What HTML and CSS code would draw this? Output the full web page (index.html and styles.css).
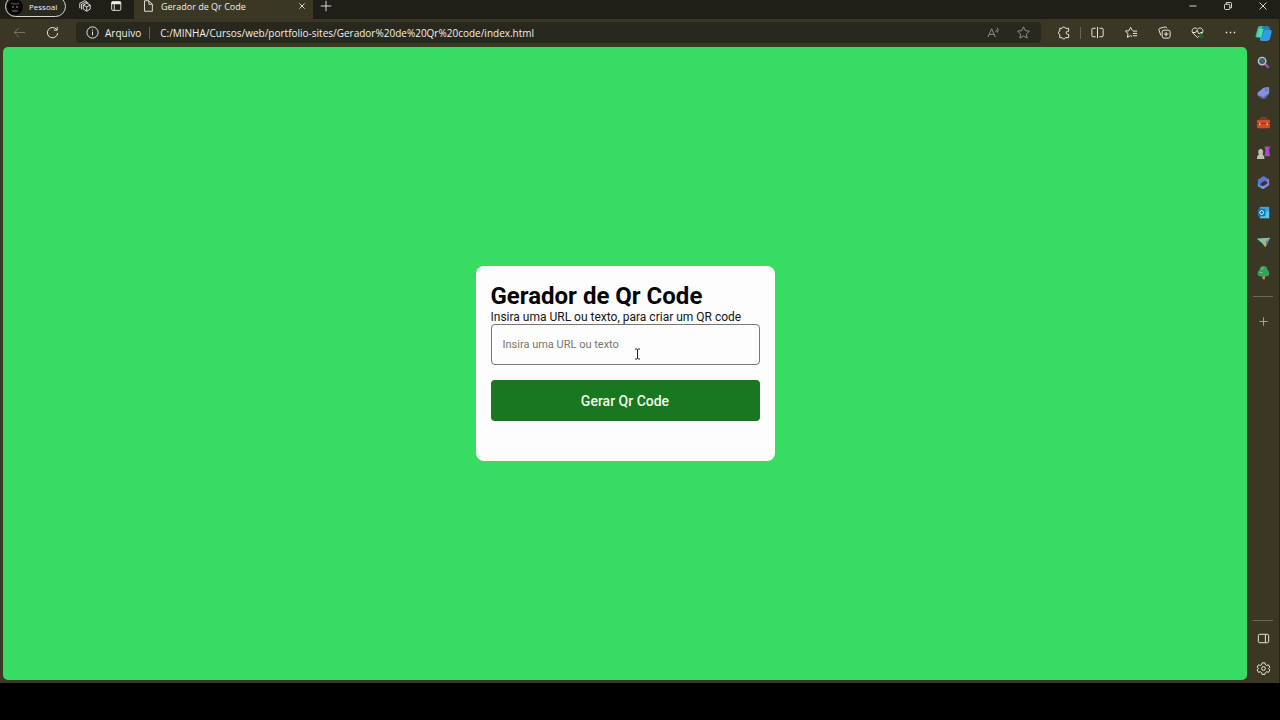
FILE: index.html
```html
<!DOCTYPE html>
<html lang="pt-BR">
<head>
<meta charset="utf-8">
<title>Gerador de Qr Code</title>
<link rel="stylesheet" href="styles.css">
</head>
<body>
<div class="browser">
  <header class="tabstrip">
    <button class="profile"><svg class="avatar" viewBox="0 0 16 16"><circle cx="8" cy="8" r="8" fill="#070707"/><path d="M4 5l1.500-1 1 1.500L8 4.500l1.500 1L10.500 4 12 5" stroke="#68652f" fill="none"/><path d="M5 8h2M9 8h2" stroke="#8c5a70" stroke-width="1.500"/><path d="M5 12h6" stroke="#55555a" stroke-width="1.500"/></svg><span>Pessoal</span></button>
    <button class="strip-btn" aria-label="Workspaces"><svg viewBox="0 0 16 16"><path d="M6 7l4-2 4 2v4.500l-4 2.500-4-2.500zM6 7l4 2 4-2M10 9v5"/><path d="M4 12V6l5-2.500 3 1M2 10.500V5l5.500-3 2.500 1"/></svg></button>
    <button class="strip-btn" aria-label="Guias verticais"><svg viewBox="0 0 16 16"><rect x="3" y="3" width="10.500" height="10" rx="1.500"/><path d="M3 4.500h10.500" stroke-width="3"/><path d="M6 6v7"/></svg></button>
    <div class="tab">
      <svg class="tab-file" viewBox="0 0 16 16"><path d="M4 2h5l4 4v8H4zM9 2v4h4"/></svg>
      <span class="tab-title">Gerador de Qr Code</span>
      <button class="tab-close" aria-label="Fechar guia"><svg viewBox="0 0 16 16"><path d="M5 5l6 6M11 5l-6 6"/></svg></button>
    </div>
    <button class="new-tab" aria-label="Nova guia"><svg viewBox="0 0 16 16"><path d="M8 2v12M2 8h12"/></svg></button>
    <div class="window-controls">
      <button aria-label="Minimizar"><svg viewBox="0 0 16 16"><path d="M4 8h8"/></svg></button>
      <button aria-label="Restaurar"><svg viewBox="0 0 16 16"><rect x="4" y="6" width="6" height="6" rx="1"/><path d="M6 6V4h5q1 0 1 1v5h-2"/></svg></button>
      <button aria-label="Fechar"><svg viewBox="0 0 16 16"><path d="M4 4l8 8M12 4l-8 8"/></svg></button>
    </div>
  </header>

  <div class="workspace">
    <div class="window">
      <nav class="toolbar">
        <button class="tool back" aria-label="Voltar"><svg viewBox="0 0 16 16"><path d="M14 8H2.500M7.500 3l-5 5 5 5"/></svg></button>
        <button class="tool" aria-label="Atualizar"><svg viewBox="0 0 16 16"><path d="M13.500 8.500A5.500 5.500 0 1 1 12.500 5M13 2v3.500H9.500"/></svg></button>
        <div class="address">
          <svg viewBox="0 0 16 16"><circle cx="8" cy="8" r="6"/><path d="M8 7v4M8 4.800v1.200"/></svg>
          <span class="scheme">Arquivo</span>
          <input class="url" aria-label="Endereço" value="C:/MINHA/Cursos/web/portfolio-sites/Gerador%20de%20Qr%20code/index.html">
          <button class="dim" aria-label="Ler em voz alta"><svg viewBox="0 0 16 16"><path d="M2 13L6 4l4 9M3.500 10h5M10.500 5q1 1 0 2.500M12 3q2 2.500 0 5"/></svg></button>
          <button class="dim" aria-label="Adicionar aos favoritos"><svg viewBox="0 0 16 16"><path d="M8 2l1.900 4 4.400.6-3.200 3 .8 4.300L8 11.800l-3.900 2.100.8-4.300-3.200-3L6.100 6z"/></svg></button>
        </div>
        <button class="tool extension" aria-label="Extensões"><svg viewBox="0 0 16 16"><path d="M4 3.500h2.500a1.800 1.800 0 0 1 3.500 0h3.500v3.200h-1a1.600 1.600 0 0 0 0 3.200h1v3.600H10a1.800 1.800 0 0 1-3.500 0H4V10a1.800 1.800 0 0 1 0-3.500z"/></svg></button>
        <button class="tool split" aria-label="Dividir tela"><svg viewBox="0 0 16 16"><path d="M6 3.500H3q-1 0-1 1v7q0 1 1 1h3M10 3.500h3q1 0 1 1v7q0 1-1 1h-3M8 2v12"/></svg></button>
        <button class="tool" aria-label="Favoritos"><svg viewBox="0 0 16 16"><path d="M9 6L7 2.500 5.300 6l-3.800.5 2.800 2.700-.7 4L7 11.300l1.500.9M9.500 6.500H14M9.500 9H14M9.500 11.500H14"/></svg></button>
        <button class="tool" aria-label="Coleções"><svg viewBox="0 0 16 16"><rect x="5.500" y="5.500" width="8.500" height="8.500" rx="2"/><path d="M9.700 7.500v4.500M7.500 9.700H12M4 11L2 5q-.3-1 .7-1.400L9 2q1 0 1.500 1.500"/></svg></button>
        <button class="tool" aria-label="Desempenho"><svg viewBox="0 0 16 16"><path d="M8 13.500L3 8.500C.5 5 5 1 8 4.500 11 1 15.500 5 13 8.500zM3 8h3l1.500-2.500 2 4L11 8h2"/><circle cx="12" cy="12" r="2.500" fill="#176226" stroke="none"/></svg></button>
        <button class="tool" aria-label="Mais"><svg viewBox="0 0 16 16"><path d="M3 8h1.500M7.300 8h1.500M11.500 8H13" stroke-width="1.500"/></svg></button>
      </nav>

      <main class="page">
        <form class="card">
          <h1>Gerador de Qr Code</h1>
          <label for="qr-text">Insira uma URL ou texto, para criar um QR code</label>
          <input id="qr-text" type="text" placeholder="Insira uma URL ou texto">
          <button type="button">Gerar Qr Code</button>
          <svg class="cursor" viewBox="0 0 7 12"><path d="M1 1h2l.5.500L4 1h2M3.500 1.500v9M1 11h2l.5-.5L4 11h2"/></svg>
        </form>
      </main>
    </div>

    <aside class="sidebar">
      <button class="copilot" aria-label="Copilot"><svg viewBox="0 0 20 20"><path d="M6 2h7q2 0 1 3l-3 9H3q-2 0-1-3l2-7q.6-2 2-2z" fill="#30bfa8"/><path d="M9 2h5q2 0 2.500 2L17 6h-4q-2 0-3 4l-1 4H7z" fill="#1781c4"/><path d="M12 6h5q2 0 1.500 3L17 15q-.7 3-3 3H8q-2 0-2-4h2q2 0 2.500-3z" fill="#319be8"/><path d="M5 5h5l-2 9H3z" fill="#50dba7"/></svg></button>
      <button aria-label="Pesquisar"><svg viewBox="0 0 16 16"><path d="M9.500 9.500l4 4" stroke="#a44fc0" stroke-width="2.500"/><circle cx="6.500" cy="6.500" r="4" fill="#45606a" stroke="#bdc7cf" stroke-width="1.500"/></svg></button>
      <button aria-label="Compras"><svg viewBox="0 0 16 16"><path d="M2 8l6-5 5-1 1 1v6l-4 5q-2 1-4 0L2 11q-1-1 0-3z" fill="#8492df" stroke="none"/><path d="M2 10l6 3 6-5-4 6q-2 1-4 0z" fill="#5d62b5" stroke="none"/><circle cx="11" cy="5" r="1" fill="#e9e9fa" stroke="#494a84"/></svg></button>
      <button aria-label="Ferramentas"><svg viewBox="0 0 16 16"><path d="M5.500 5V3h5v2" stroke="#b84b2c"/><rect x="1" y="5" width="14" height="9" rx="1.500" fill="#cf4d25" stroke="none"/><path d="M1 9h14" stroke="#86301b"/><path d="M4 8v3M12 8v3" stroke="#f0ad71" stroke-width="1.500"/></svg></button>
      <button aria-label="Jogos"><svg viewBox="0 0 16 16"><path d="M9 1l1.500 1L12 1l1 1 2-1-1 5 1 6H9l1-6z" fill="#a84bc3" stroke="none"/><path d="M1 15q0-4 2-5-2-5 2-6 4 1 2 6 2 1 2 5z" fill="#c3beb5" stroke="none"/></svg></button>
      <button aria-label="Microsoft 365"><svg viewBox="0 0 16 16"><path d="M8 1l5 3v4l-4-2-4 3v4l-3-2V5z" fill="#5a75d6" stroke="none"/><path d="M13 4l1 1v6l-6 4-3-2v-2l3 1 4-3z" fill="#9980d4" stroke="none"/><path d="M2 9l3 4 4-2v3l-2 1-5-3z" fill="#4db3dc" stroke="none"/></svg></button>
      <button aria-label="Outlook"><svg viewBox="0 0 16 16"><path d="M4 2h10v12H4z" fill="#39a8df" stroke="none"/><path d="M8 9l6-3v8H4z" fill="#54c5ed" stroke="none"/><rect x="2" y="4" width="8" height="8" rx="1" fill="#1673ae" stroke="none"/><circle cx="6" cy="8" r="2" stroke="#e8f6ff"/></svg></button>
      <button aria-label="Drop"><svg viewBox="0 0 16 16"><path d="M1 4l14-1-5 10-3-4z" fill="#44a7b5" stroke="none"/><path d="M1 4l14-1-8 6z" fill="#77c8a2" stroke="none"/><path d="M15 3L7 9l3 4z" fill="#dda449" stroke="none"/><path d="M15 3l-5 10 1-6z" fill="#4a7fce" stroke="none"/></svg></button>
      <button aria-label="E-tree"><svg viewBox="0 0 16 16"><path d="M7 10h2.500v5q-1 1-2.500 0z" fill="#d99835" stroke="none"/><path d="M8 1q4 0 4 4 3 2 2 6-3 2-6 1-3 1-6-1-1-4 2-6 0-4 4-4z" fill="#37a15c" stroke="none"/><path d="M5 5q1-2 3-2M4 8h3" stroke="#82cf83"/></svg></button>
      <hr>
      <button class="add" aria-label="Personalizar"><svg viewBox="0 0 16 16"><path d="M8 3.500v9M3.500 8h9"/></svg></button>
      <hr class="lower">
      <button aria-label="Barra lateral"><svg viewBox="0 0 16 16"><rect x="2.500" y="3.500" width="11" height="9" rx="1.500"/><path d="M10 4v8"/></svg></button>
      <button aria-label="Configurações"><svg viewBox="0 0 16 16"><path d="M6.500 2h3l.5 2 1.300.7 2-.6 1.500 2.600L13.300 8l1.500 1.500-1.500 2.600-2-.6-1.300.8-.5 2h-3l-.5-2-1.300-.8-2 .6-1.500-2.600L2.700 8 1.200 6.700l1.500-2.600 2 .6L6 4z"/><circle cx="8" cy="8" r="2"/></svg></button>
    </aside>
  </div>
</div>
</body>
</html>
```
FILE: styles.css
```css
* { box-sizing: border-box; }
body { margin: 0; background: #000; font-family: "Open Sans", "Noto Sans", sans-serif; color: #f0f0ea; }
button { padding: 0; border: 0; background: none; color: inherit; font: inherit; display: flex; align-items: center; justify-content: center; flex: none; }
input { font: inherit; color: inherit; }
svg { width: 14px; height: 14px; fill: none; stroke: currentColor; stroke-width: 1; flex: none; }

.browser { height: 100vh; padding-bottom: 37px; display: flex; flex-direction: column; }

.tabstrip { height: 19px; flex: none; display: flex; align-items: flex-end; background: #1f1f18; overflow: hidden; padding-left: 5px; font-size: 9px; }
.profile { height: 21px; width: 61px; margin-bottom: 2px; margin-right: 3px; border: 1px solid #d8d8d0; border-radius: 11px; background: #2b2a22; justify-content: flex-start; gap: 6px; font-size: 8px; padding-left: 1px; }
.avatar { width: 16px; height: 16px; stroke: none; }
.strip-btn { width: 31px; height: 26px; }
.tab { height: 26px; width: 179px; margin-left: 3px; padding: 0 4px 0 7px; display: flex; align-items: center; gap: 6px; background: #3a3824; }
.tab-title { flex: 1; white-space: nowrap; }
.tab-close, .new-tab { height: 26px; }
.new-tab { width: 26px; }
.window-controls { margin-left: auto; display: flex; }
.window-controls button { width: 35px; height: 26px; }

.workspace { flex: 1; display: flex; min-height: 0; background: #3a3824; }
.window { flex: 1; min-width: 0; display: flex; flex-direction: column; padding: 0 0 3px 3px; }

.toolbar { height: 28px; flex: none; display: flex; align-items: center; padding-bottom: 1px; }
.tool { width: 33px; height: 27px; }
.toolbar svg { width: 15px; height: 15px; }
.back { color: #77766b; }
.extension { margin-left: 6px; }
.split { width: 35px; background: linear-gradient(#67665c, #67665c) left center / 1px 12px no-repeat; }
.address { flex: 1; min-width: 0; height: 21px; margin-left: 7px; padding: 0 3px 0 9px; display: flex; align-items: center; background: #29281e; border-radius: 4px; font-size: 10px; }
.scheme { padding: 0 8px 0 5px; border-right: 1px solid #67665c; line-height: 12px; }
.url { flex: 1; min-width: 0; border: 0; padding: 0 0 0 10px; background: none; outline: 0; }
.dim { width: 30px; color: #97958b; }

.page { flex: 1; min-height: 0; display: grid; place-items: center; background: #39dc62; border-radius: 5px; }
.card { position: relative; width: 299px; padding: 17px 15px 40px; display: flex; flex-direction: column; background: #fdfdfd; border-radius: 8px; font-family: Roboto, sans-serif; color: #141414; }
.card h1 { margin: 0; font-size: 24px; line-height: 27px; color: #050505; }
.card label { font-size: 12px; line-height: 14px; white-space: nowrap; }
.card input { height: 41px; padding: 0 11px; border: 1px solid #777770; border-radius: 4px; background: #fdfdfd; font-size: 11px; }
.card input::placeholder { color: #77776c; opacity: 1; }
.card button { height: 41px; margin-top: 15px; border-radius: 4px; background: #18771f; color: #f0f8ee; font-size: 14px; font-weight: 500; }
.cursor { position: absolute; left: 158px; top: 82px; width: 7px; height: 12px; color: #222; }

.sidebar { width: 33px; flex: none; display: flex; flex-direction: column; align-items: center; border-right: 1px solid #24231b; }
.sidebar button { width: 33px; height: 30px; }
.sidebar svg { width: 15px; height: 15px; }
.sidebar .copilot { height: 28px; }
.sidebar .copilot svg { width: 19px; height: 19px; stroke: none; }
.sidebar hr { width: 20px; height: 1px; margin: 9px 0; border: 0; background: #68675e; flex: none; }
.sidebar .lower { margin: auto 0 2px; }
.sidebar .add { color: #a7a69d; }
```
